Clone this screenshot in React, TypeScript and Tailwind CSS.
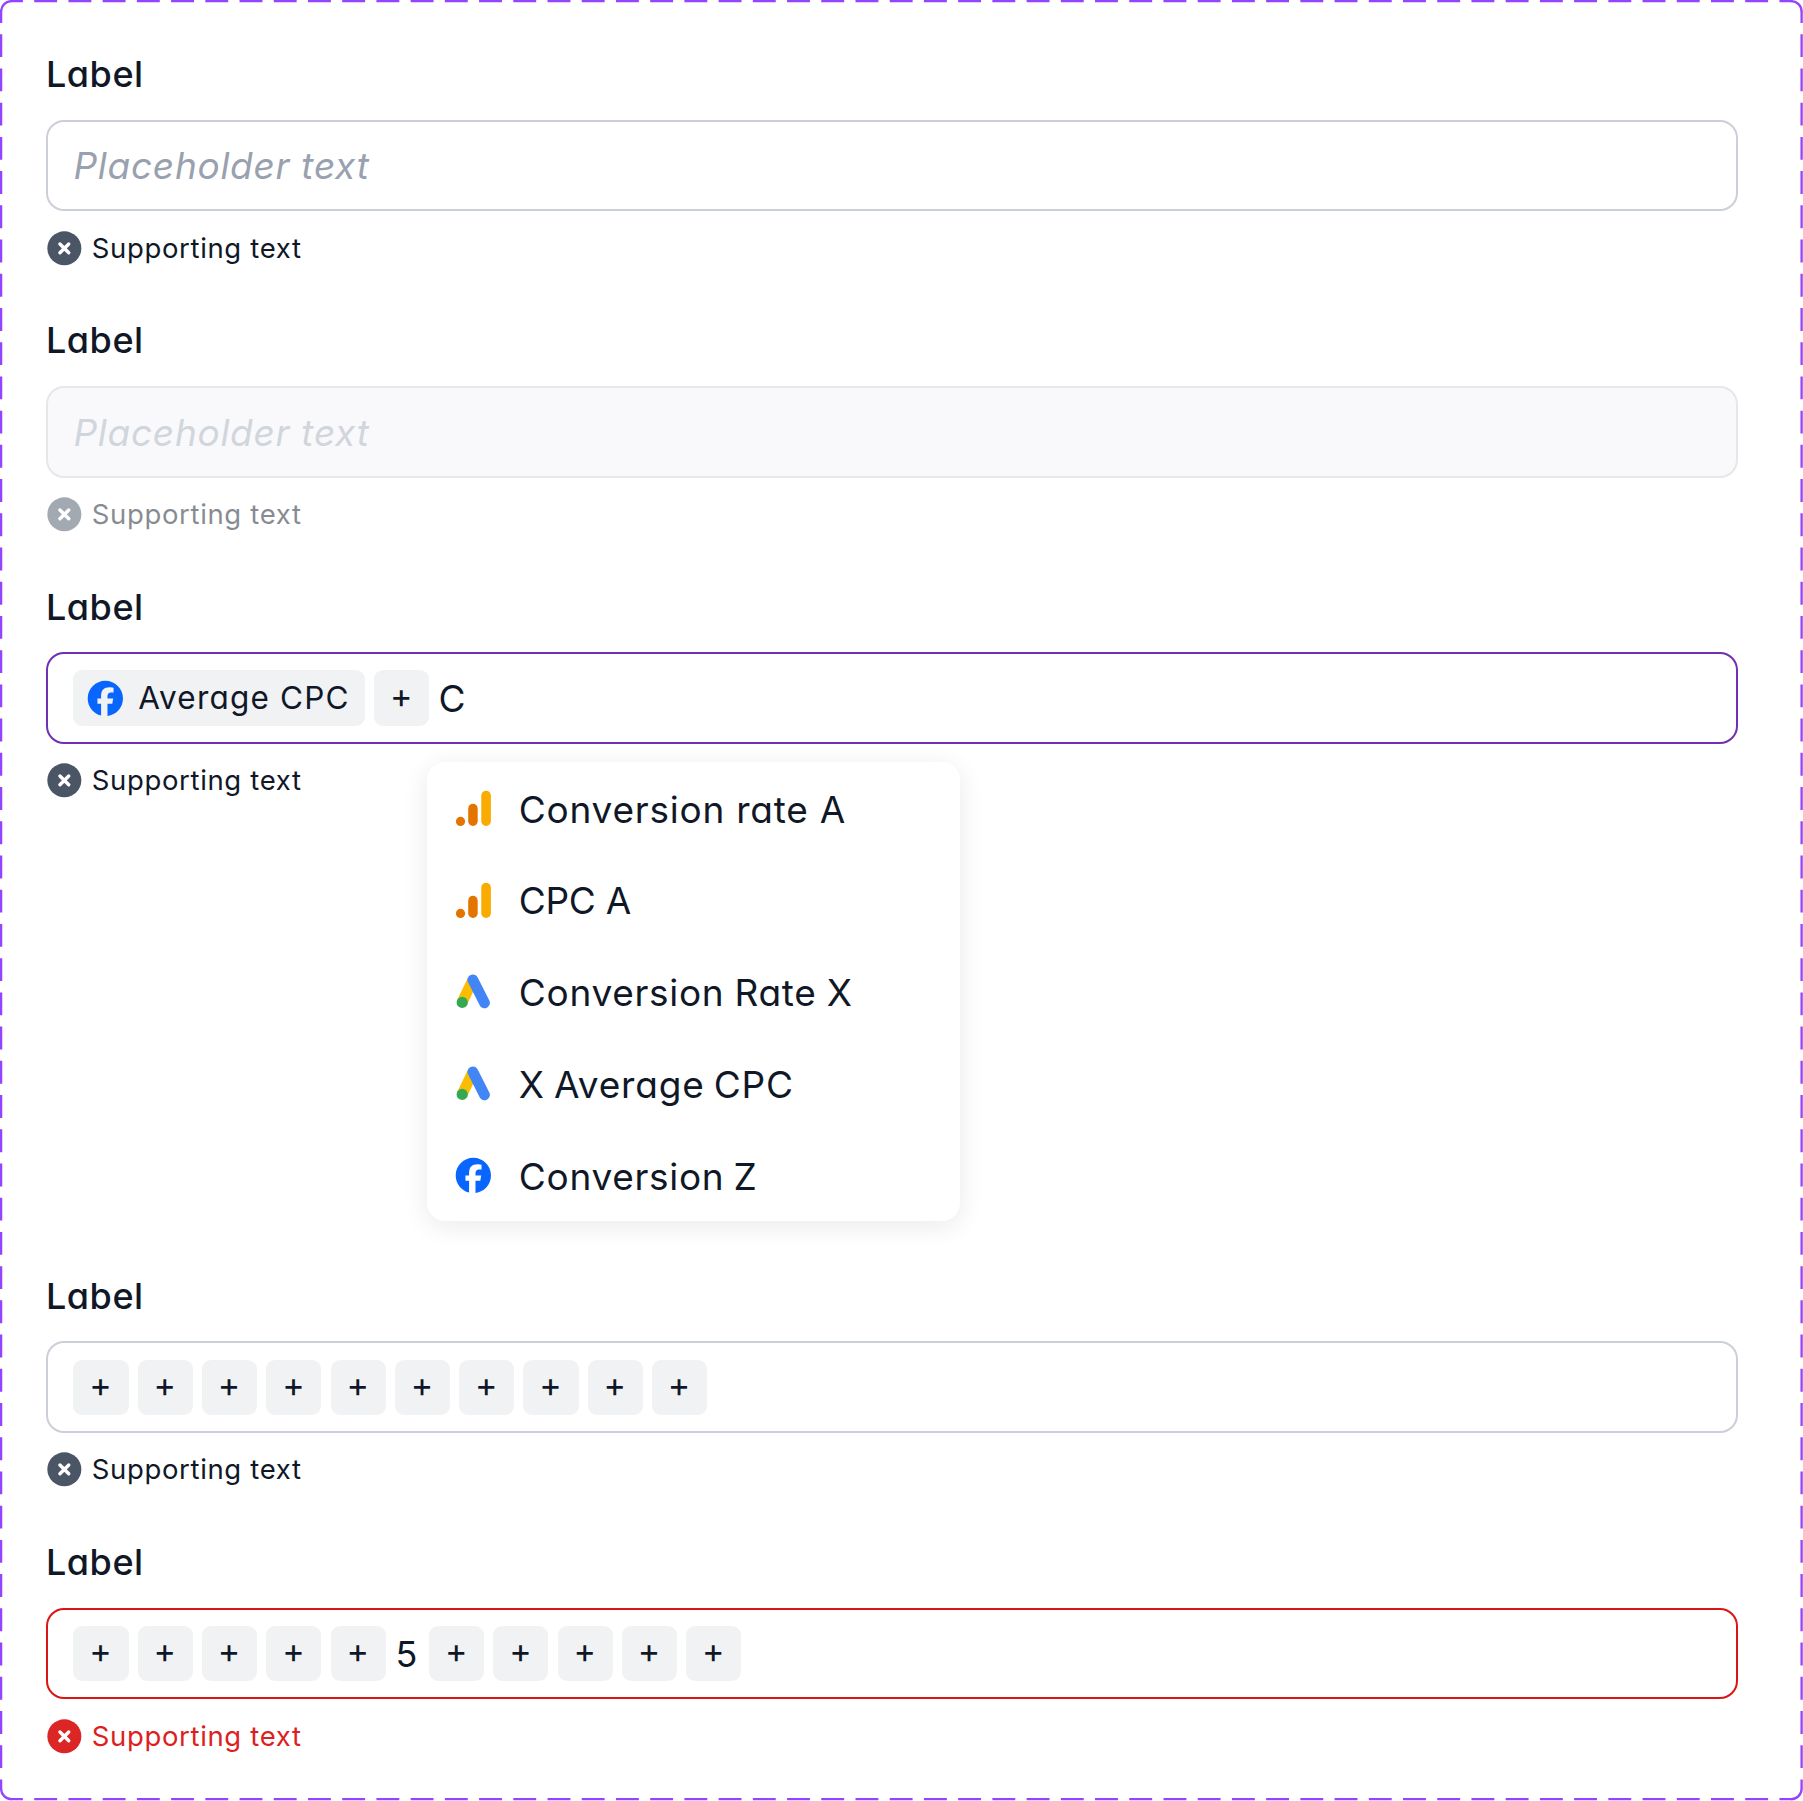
import type { ReactNode } from 'react';

type Tone = 'default' | 'disabled' | 'active' | 'error';

const BOX: Record<Tone, string> = {
  default: 'border-[#cbcfd7] bg-white',
  disabled: 'border-gray-200 bg-[#f9f9fb]',
  active: 'border-[#7030b5] bg-white',
  error: 'border-[#dc1414] bg-white',
};

function DashedFrame() {
  const edge = {
    stroke: '#9443ff',
    strokeWidth: 2.3,
    strokeDasharray: '22.9 11.32',
    strokeDashoffset: 11,
  };
  return (
    <svg
      className="pointer-events-none absolute inset-0"
      width="1803"
      height="1801"
      viewBox="0 0 1803 1801"
      fill="none"
    >
      <line x1="11" y1="1" x2="1792" y2="1" {...edge} />
      <line x1="11" y1="1799.2" x2="1792" y2="1799.2" {...edge} />
      <line x1="1.1" y1="11" x2="1.1" y2="1789" {...edge} />
      <line x1="1801.6" y1="11" x2="1801.6" y2="1789" {...edge} />
      <path
        d="M1.1 11.5A10.4 10.4 0 0 1 11.5 1.1M1791.2 1.1A10.4 10.4 0 0 1 1801.6 11.5M1801.6 1788.8A10.4 10.4 0 0 1 1791.2 1799.2M11.5 1799.2A10.4 10.4 0 0 1 1.1 1788.8"
        stroke="#9443ff"
        strokeWidth="2.3"
      />
    </svg>
  );
}

function FacebookIcon() {
  return (
    <svg className="size-[36.7px] shrink-0" viewBox="-0.48 -0.48 24.96 24.96">
      <path
        fill="#0866ff"
        d="M9.101 23.691v-7.98H6.627v-3.667h2.474v-1.58c0-4.085 1.848-5.978 5.858-5.978.401 0 .955.042 1.468.103a8.68 8.68 0 0 1 1.141.195v3.325a8.623 8.623 0 0 0-.653-.036 26.805 26.805 0 0 0-.733-.009c-.707 0-1.259.096-1.675.309a1.686 1.686 0 0 0-.679.622c-.258.42-.374.995-.374 1.752v1.297h3.919l-.386 2.103-.287 1.564h-3.246v8.245C19.396 23.238 24 18.179 24 12.044c0-6.627-5.373-12-12-12s-12 5.373-12 12c0 5.628 3.874 10.35 9.101 11.647Z"
      />
    </svg>
  );
}

function AnalyticsIcon() {
  return (
    <svg className="size-[36.7px] shrink-0" viewBox="0 0 36.7 36.7">
      <circle cx="5.5" cy="31.4" r="4.6" fill="#e37400" />
      <rect x="13.2" y="13.8" width="9.5" height="22.2" rx="4.7" fill="#e37400" />
      <rect x="26.3" y="0.8" width="9.6" height="35.2" rx="4.8" fill="#f9ab00" />
    </svg>
  );
}

function AdsIcon() {
  return (
    <svg className="size-[36.7px] shrink-0" viewBox="0 0 36.7 36.7" strokeWidth="10.8">
      <path d="M17.9 6.9 7.2 29.2" stroke="#fbbc04" />
      <path d="M17.9 6.9 29.5 29.9" stroke="#4285f4" strokeLinecap="round" />
      <circle cx="7.2" cy="29.4" r="5.6" fill="#34a853" />
    </svg>
  );
}

function CrossCircle({ className }: { className: string }) {
  return (
    <svg className={`size-[36.7px] shrink-0 ${className}`} viewBox="-18.35 -18.35 36.7 36.7">
      <circle r="17" fill="currentColor" />
      <path
        d="M-4.4-4.4 4.4 4.4M4.4-4.4-4.4 4.4"
        stroke="#fff"
        strokeWidth="3.4"
        strokeLinecap="round"
      />
    </svg>
  );
}

function Field({
  tone = 'default',
  children,
  menu,
}: {
  tone?: Tone;
  children: ReactNode;
  menu?: ReactNode;
}) {
  const support = tone === 'error' ? 'text-[#dc1f1f]' : 'text-gray-900';
  const icon = tone === 'error' ? 'text-[#dc2626]' : 'text-gray-600';
  return (
    <div
      className={`relative flex flex-col gap-[18.4px] ${menu ? 'h-[643.3px]' : ''}`}
    >
      <label className="h-[55.1px] pt-[1px] text-[36px] leading-[55px] font-medium tracking-[0.55px]">
        Label
      </label>
      <div
        className={`flex h-[91.8px] w-[1692px] items-center gap-[9.2px] rounded-[18px] border-2 pl-[25.6px] ${BOX[tone]}`}
      >
        {children}
      </div>
      <div
        className={`flex h-[36.7px] items-center gap-[9.2px] ${tone === 'disabled' ? 'opacity-50' : ''}`}
      >
        <CrossCircle className={icon} />
        <span className={`pb-px text-[27.5px] leading-[36px] tracking-[0.65px] ${support}`}>
          Supporting text
        </span>
      </div>
      {menu}
    </div>
  );
}

function Placeholder({ className }: { className: string }) {
  return (
    <span className={`pt-px text-[37px] leading-[55px] tracking-[0.73px] italic ${className}`}>
      Placeholder text
    </span>
  );
}

function Plus() {
  return (
    <span className="flex size-[55.1px] shrink-0 items-center justify-center rounded-[9px] bg-[#f1f2f4] pr-px pb-[4px] text-[34px] leading-none">
      +
    </span>
  );
}

const OPTIONS: { icon: ReactNode; text: string; spacing: string }[] = [
  { icon: <AnalyticsIcon />, text: 'Conversion rate A', spacing: 'tracking-[0.76px]' },
  { icon: <AnalyticsIcon />, text: 'CPC A', spacing: 'tracking-[-0.3px]' },
  { icon: <AdsIcon />, text: 'Conversion Rate X', spacing: 'tracking-[0.7px] [word-spacing:-1px]' },
  { icon: <AdsIcon />, text: 'X Average CPC', spacing: 'tracking-[0.8px] [word-spacing:-2px]' },
  { icon: <FacebookIcon />, text: 'Conversion Z', spacing: 'tracking-[0.7px] [word-spacing:-2px]' },
];

function Menu() {
  return (
    <ul className="absolute top-[183.6px] left-[381.2px] w-[532.5px] rounded-[18px] bg-white shadow-[0_5px_26px_rgba(17,24,39,0.09)]">
      {OPTIONS.map((o) => (
        <li key={o.text} className="flex h-[91.8px] items-center gap-[27.5px] pl-[27.5px]">
          {o.icon}
          <span className={`pt-[2px] text-[37px] leading-[55px] ${o.spacing}`}>{o.text}</span>
        </li>
      ))}
    </ul>
  );
}

export default function App() {
  return (
    <main className="relative flex h-[1801px] w-[1803px] flex-col gap-[45.9px] bg-white px-[45.9px] pt-[46.1px] font-['Inter',sans-serif] text-gray-900 [font-feature-settings:'cv11']">
      <Field>
        <Placeholder className="text-gray-400" />
      </Field>
      <Field tone="disabled">
        <Placeholder className="text-gray-300" />
      </Field>
      <Field tone="active" menu={<Menu />}>
        <span className="flex h-[55.1px] w-[291.5px] items-center gap-[14.5px] rounded-[9px] bg-[#f1f2f4] pl-[13.6px]">
          <FacebookIcon />
          <span className="pt-px text-[31.5px] leading-[46px] tracking-[1.2px] whitespace-nowrap">
            Average CPC
          </span>
        </span>
        <Plus />
        <span className="pt-px text-[37px] leading-[55px]">C</span>
      </Field>
      <Field>
        {Array.from({ length: 10 }, (_, i) => (
          <Plus key={i} />
        ))}
      </Field>
      <Field tone="error">
        {Array.from({ length: 5 }, (_, i) => (
          <Plus key={i} />
        ))}
        <span className="w-[25px] pt-[2px] pr-[2px] text-center text-[36px] leading-[55px]">5</span>
        {Array.from({ length: 5 }, (_, i) => (
          <Plus key={i} />
        ))}
      </Field>
      <DashedFrame />
    </main>
  );
}
